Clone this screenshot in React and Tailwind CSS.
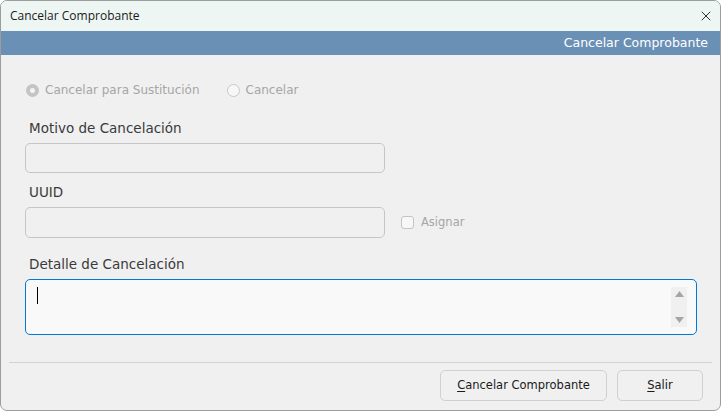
import { X } from "lucide-react"

const font = { fontFamily: '"DejaVu Sans", sans-serif' }

const Underlined = ({ first, rest }) => (
  <span>
    <span className="underline underline-offset-2">{first}</span>
    {rest}
  </span>
)

const Radio = ({ checked, label }) => (
  <label className="flex items-center gap-[6px] text-[12px] text-[#a6a6a6]">
    <span
      className={`flex h-[13px] w-[13px] items-center justify-center rounded-full border ${
        checked ? "border-[#c4c4c4] bg-[#c4c4c4]" : "border-[#c8c8c8] bg-[#f7f7f7]"
      }`}
    >
      {checked && <span className="h-[5px] w-[5px] rounded-full bg-[#f4f4f4]" />}
    </span>
    {label}
  </label>
)

const Label = ({ children }) => (
  <span className="mb-[6px] pl-[4px] text-[13.5px] leading-[18px] text-[#3a3a3a]">{children}</span>
)

export default function App() {
  return (
    <div className="h-[411px] w-[721px] overflow-hidden" style={font}>
      <div className="flex h-full flex-col overflow-hidden rounded-[7px] border border-[#9c9c9c] bg-[#f0f0f0]">
        <div className="flex h-[30px] shrink-0 items-center justify-between bg-[#edf6f3] pl-[9px] pr-[6px]">
          <span className="text-[12px] text-[#1a1a1a]" style={{ fontFamily: '"Open Sans", sans-serif' }}>
            Cancelar Comprobante
          </span>
          <X className="h-[16px] w-[16px] text-[#222]" strokeWidth={1.4} />
        </div>
        <div className="flex h-[24px] shrink-0 items-center justify-end bg-[#6a91b5] pr-[12px] text-[12.5px] text-white">
          Cancelar Comprobante
        </div>

        <div className="flex flex-1 flex-col px-[24px] pt-[26px]">
          <div className="flex items-center gap-[27px] pl-[1px]">
            <Radio checked label="Cancelar para Sustitución" />
            <Radio label="Cancelar" />
          </div>

          <div className="mt-[20px] flex flex-col">
            <Label>Motivo de Cancelación</Label>
            <div className="h-[30px] w-[360px] rounded-[5px] border border-[#c6c6c6]" />

            <div className="mt-[10px] flex flex-col">
              <Label>UUID</Label>
              <div className="flex items-center gap-[16px]">
                <div className="h-[31px] w-[360px] rounded-[5px] border border-[#c6c6c6]" />
                <label className="flex items-center gap-[7px] text-[11.5px] text-[#a6a6a6]">
                  <span className="h-[13px] w-[13px] rounded-[3px] border border-[#c4c4c4] bg-[#f7f7f7]" />
                  Asignar
                </label>
              </div>
            </div>

            <div className="mt-[17px] flex flex-col">
              <Label>Detalle de Cancelación</Label>
              <div className="flex h-[56px] w-[672px] justify-between rounded-[5px] border border-[#0078d7] bg-[#f9f9f9] pl-[11px] pr-[9px] pt-[7px]">
                <span className="h-[17px] w-[1px] bg-black" />
                <div className="flex h-[40px] w-[16px] flex-col items-center justify-between bg-[#f0f0f0] py-[4px]">
                  <svg width="9" height="6" viewBox="0 0 9 6">
                    <path d="M4.5 0 L9 6 L0 6 Z" fill="#a5a5a5" />
                  </svg>
                  <svg width="9" height="6" viewBox="0 0 9 6">
                    <path d="M0 0 L9 0 L4.5 6 Z" fill="#a5a5a5" />
                  </svg>
                </div>
              </div>
            </div>
          </div>
        </div>

        <div className="mx-[8px] h-px bg-[#d2d2d2]" />
        <div className="flex justify-end gap-[10px] pb-[9px] pr-[17px] pt-[7px]">
          <button className="h-[31px] w-[167px] rounded-[5px] border border-[#d0d0d0] bg-[#f0f0f0] text-[11.5px] text-[#1a1a1a]">
            <Underlined first="C" rest="ancelar Comprobante" />
          </button>
          <button className="h-[31px] w-[86px] rounded-[5px] border border-[#d0d0d0] bg-[#f0f0f0] text-[11.5px] text-[#1a1a1a]">
            <Underlined first="S" rest="alir" />
          </button>
        </div>
      </div>
    </div>
  )
}
